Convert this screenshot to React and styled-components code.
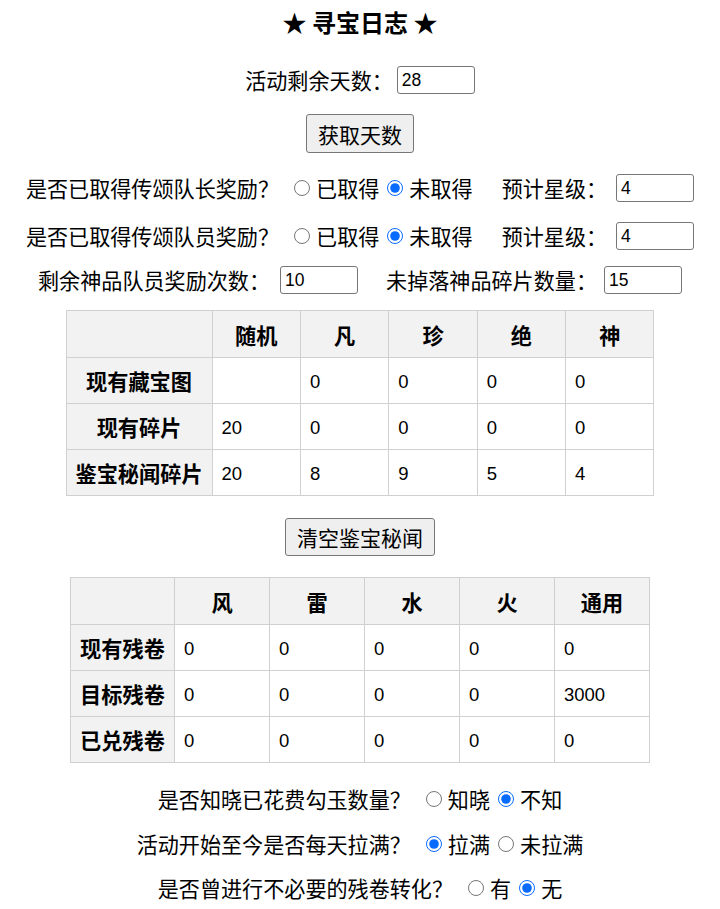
import React from "react";
import styled, { createGlobalStyle } from "styled-components";

const Global = createGlobalStyle`
  html, body { margin: 0; padding: 0; background: #fff; }
  body {
    font-family: "Noto Sans CJK SC", "Liberation Sans", sans-serif;
    font-size: 21.1px;
    color: #000;
  }
`;

const Page = styled.div`
  display: flex;
  flex-direction: column;
  align-items: center;
  padding-top: 6px;
  padding-bottom: 8px;
`;

const Title = styled.h2`
  margin: 0;
  font-size: 24px;
  line-height: 32px;
  font-weight: 700;
`;

const Row = styled.div`
  display: flex;
  align-items: center;
  justify-content: center;
  height: 28px;
  margin-top: ${(p) => p.$top}px;
  white-space: nowrap;
  line-height: 28px;
`;

const Label = styled.span`
  margin-left: ${(p) => p.$gap || 0}px;
`;

const NumInput = styled.input`
  box-sizing: border-box;
  width: 78px;
  height: 28px;
  margin-left: ${(p) => p.$gap || 0}px;
  padding: 1px 4px;
  border: 1px solid #767676;
  border-radius: 3px;
  font-family: "Liberation Sans", sans-serif;
  font-size: 17.5px;
  color: #000;
  background: #fff;
`;

const Radio = styled.input.attrs({ type: "radio" })`
  width: 16px;
  height: 16px;
  margin: 0 6px 0 ${(p) => p.$gap ?? 8}px;
  accent-color: #0a6cff;
`;

const Button = styled.button`
  box-sizing: border-box;
  height: ${(p) => p.$h}px;
  margin-top: ${(p) => p.$top}px;
  padding: 0 11px;
  font-family: "Noto Sans CJK SC", sans-serif;
  font-size: 21px;
  color: #000;
  background: #efefef;
  border: 1px solid #767676;
  border-radius: 3px;
`;

const Table = styled.table`
  border-collapse: collapse;
  margin-top: ${(p) => p.$top}px;
  table-layout: fixed;
  width: ${(p) => p.$w}px;
`;

const Th = styled.th`
  box-sizing: border-box;
  height: ${(p) => p.$h || 46}px;
  padding: 0 6px;
  border: 1px solid #d0d0d0;
  background: #f2f2f2;
  font-size: 21.2px;
  font-weight: 700;
  text-align: center;
  white-space: nowrap;
`;

const Td = styled.td`
  box-sizing: border-box;
  height: 46px;
  padding: 2px 9px 0;
  border: 1px solid #d0d0d0;
  font-family: "Liberation Sans", "Noto Sans CJK SC", sans-serif;
  font-size: 18.5px;
  text-align: left;
`;

function Choice({ name, options, checked, first = 15 }) {
  return options.map((o, i) => (
    <React.Fragment key={o}>
      <Radio name={name} $gap={i === 0 ? first : 8} defaultChecked={i === checked} />
      <span>{o}</span>
    </React.Fragment>
  ));
}

function DataTable({ top, width, firstCol, cols, rows }) {
  const other = (width - firstCol) / cols.length;
  return (
    <Table $top={top} $w={width}>
      <colgroup>
        <col style={{ width: firstCol }} />
        {cols.map((c) => (
          <col key={c} style={{ width: other }} />
        ))}
      </colgroup>
      <thead>
        <tr>
          <Th $h={47} />
          {cols.map((c) => (
            <Th key={c} $h={47}>{c}</Th>
          ))}
        </tr>
      </thead>
      <tbody>
        {rows.map(([head, ...vals]) => (
          <tr key={head}>
            <Th>{head}</Th>
            {vals.map((v, i) => (
              <Td key={i}>{v}</Td>
            ))}
          </tr>
        ))}
      </tbody>
    </Table>
  );
}

export default function App() {
  return (
    <>
      <Global />
      <Page>
        <Title>★ 寻宝日志 ★</Title>

        <Row $top={28}>
          <Label>活动剩余天数：</Label>
          <NumInput defaultValue="28" $gap={4} />
        </Row>

        <Button $top={20} $h={39}>获取天数</Button>

        <Row $top={21}>
          <Label>是否已取得传颂队长奖励？</Label>
          <Choice name="captain" options={["已取得", "未取得"]} checked={1} />
          <Label $gap={29}>预计星级：</Label>
          <NumInput defaultValue="4" $gap={9} />
        </Row>

        <Row $top={20}>
          <Label>是否已取得传颂队员奖励？</Label>
          <Choice name="member" options={["已取得", "未取得"]} checked={1} />
          <Label $gap={29}>预计星级：</Label>
          <NumInput defaultValue="4" $gap={9} />
        </Row>

        <Row $top={16}>
          <Label>剩余神品队员奖励次数：</Label>
          <NumInput defaultValue="10" $gap={10} />
          <Label $gap={28}>未掉落神品碎片数量：</Label>
          <NumInput defaultValue="15" $gap={7} />
        </Row>

        <DataTable
          top={16}
          width={588}
          firstCol={146}
          cols={["随机", "凡", "珍", "绝", "神"]}
          rows={[
            ["现有藏宝图", "", "0", "0", "0", "0"],
            ["现有碎片", "20", "0", "0", "0", "0"],
            ["鉴宝秘闻碎片", "20", "8", "9", "5", "4"],
          ]}
        />

        <Button $top={22} $h={38}>清空鉴宝秘闻</Button>

        <DataTable
          top={21}
          width={579}
          firstCol={104}
          cols={["风", "雷", "水", "火", "通用"]}
          rows={[
            ["现有残卷", "0", "0", "0", "0", "0"],
            ["目标残卷", "0", "0", "0", "0", "3000"],
            ["已兑残卷", "0", "0", "0", "0", "0"],
          ]}
        />

        <Row $top={22}>
          <Label>是否知晓已花费勾玉数量？</Label>
          <Choice name="known" options={["知晓", "不知"]} checked={1} />
        </Row>

        <Row $top={17}>
          <Label>活动开始至今是否每天拉满？</Label>
          <Choice name="full" options={["拉满", "未拉满"]} checked={0} />
        </Row>

        <Row $top={16}>
          <Label>是否曾进行不必要的残卷转化？</Label>
          <Choice name="convert" options={["有", "无"]} checked={1} />
        </Row>
      </Page>
    </>
  );
}
